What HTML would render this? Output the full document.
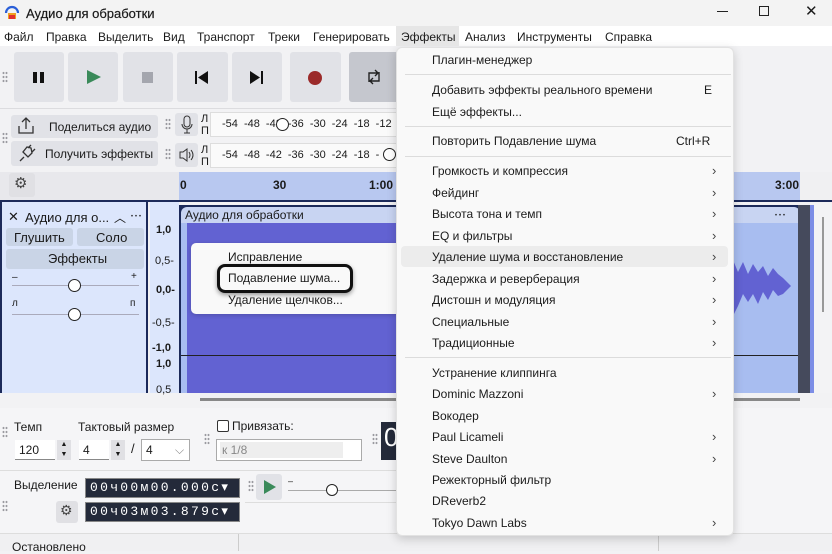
<!DOCTYPE html>
<html><head><meta charset="utf-8"><style>
*{box-sizing:border-box;margin:0;padding:0}
body{width:832px;height:551px;overflow:hidden;background:#f2f2f4;font-family:"Liberation Sans","Noto Sans CJK SC",sans-serif;font-size:12px;color:#1a1a1a;position:relative}
.a{position:absolute}
.btn{position:absolute;background:#e1e2e7;border-radius:3px}
.mi{position:absolute;left:432px;font-size:12px;color:#1b1b1b}
.ar{position:absolute;left:712px;font-size:13px;color:#444}
.sep{position:absolute;left:405px;width:326px;height:1px;background:#dcdcdc}
.grip{position:absolute;width:6px;height:12px;background-image:radial-gradient(#9a9aa0 0.8px,transparent 1px);background-size:3px 4px}
.dark{position:absolute;background:#242a3a;color:#fff;font-family:"Liberation Mono",monospace;font-size:13px;letter-spacing:2.3px;border:1px solid #888;padding:1px 0 0 4px}
</style></head><body>
<div class="a" style="left:0;top:0;width:832px;height:26px;background:#f3f3f3"></div>
<svg class="a" style="left:4px;top:4px" width="16" height="16"><path d="M2 9a6 6 0 0 1 12 0" stroke="#2a5fd8" stroke-width="2.2" fill="none"/><rect x="4" y="9" width="8" height="6" fill="#f0a020"/><rect x="5" y="11" width="6" height="4" fill="#e03030"/></svg>
<div class="a" style="left:26px;top:6px;font-size:13px;-webkit-text-stroke:0.2px #1a1a1a">Аудио для обработки</div>
<div class="a" style="left:717px;top:11px;width:11px;height:1px;background:#222"></div>
<div class="a" style="left:759px;top:6px;width:10px;height:10px;border:1px solid #222"></div>
<div class="a" style="left:805px;top:2px;font-size:15px">✕</div>
<div class="a" style="left:0;top:26px;width:832px;height:20px;background:#fff"></div>
<div class="a" style="left:4px;top:30px">Файл</div>
<div class="a" style="left:46px;top:30px">Правка</div>
<div class="a" style="left:98px;top:30px">Выделить</div>
<div class="a" style="left:163px;top:30px">Вид</div>
<div class="a" style="left:197px;top:30px">Транспорт</div>
<div class="a" style="left:268px;top:30px">Треки</div>
<div class="a" style="left:313px;top:30px">Генерировать</div>
<div class="a" style="left:465px;top:30px">Анализ</div>
<div class="a" style="left:517px;top:30px">Инструменты</div>
<div class="a" style="left:605px;top:30px">Справка</div>
<div class="grip" style="left:2px;top:71px"></div>
<div class="btn" style="left:14px;top:52px;width:50px;height:50px"></div>
<div class="a" style="left:33px;top:72px;width:4px;height:11px;background:#111"></div><div class="a" style="left:40px;top:72px;width:4px;height:11px;background:#111"></div>
<div class="btn" style="left:68px;top:52px;width:50px;height:50px"></div>
<svg class="a" style="left:86px;top:69px" width="16" height="16"><path d="M1 1L15 8L1 15Z" fill="#3a8a5a"/></svg>
<div class="btn" style="left:123px;top:52px;width:50px;height:50px"></div>
<div class="a" style="left:142px;top:72px;width:11px;height:11px;background:#a4a6ae"></div>
<div class="btn" style="left:177px;top:52px;width:51px;height:50px"></div>
<svg class="a" style="left:194px;top:70px" width="16" height="16"><rect x="1" y="1" width="2" height="13" fill="#111"/><path d="M14 1L4 7.5L14 14Z" fill="#111"/></svg>
<div class="btn" style="left:232px;top:52px;width:50px;height:50px"></div>
<svg class="a" style="left:249px;top:70px" width="16" height="16"><rect x="12" y="1" width="2" height="13" fill="#111"/><path d="M1 1L11 7.5L1 14Z" fill="#111"/></svg>
<div class="btn" style="left:290px;top:52px;width:51px;height:50px"></div>
<div class="a" style="left:308px;top:71px;width:14px;height:14px;border-radius:50%;background:#9b2a2a"></div>
<div class="btn" style="left:349px;top:52px;width:50px;height:50px;background:#c5c7ce"></div>
<svg class="a" style="left:365px;top:68px" width="18" height="18"><path d="M4 14V5h9M10 2l3 3-3 3M14 4v9H5M8 16l-3-3 3-3" stroke="#222" stroke-width="1.4" fill="none"/></svg>
<div class="a" style="left:0;top:108px;width:400px;height:1px;background:#dcdcdf"></div>
<div class="grip" style="left:2px;top:132px"></div>
<div class="btn" style="left:11px;top:115px;width:147px;height:23px"></div>
<svg class="a" style="left:16px;top:117px" width="20" height="18"><path d="M3 9v7h14V9M10 12V2M6 5l4-4 4 4" stroke="#333" stroke-width="1.3" fill="none"/></svg>
<div class="a" style="left:49px;top:120px">Поделиться аудио</div>
<div class="btn" style="left:11px;top:141px;width:147px;height:25px"></div>
<svg class="a" style="left:17px;top:143px" width="20" height="20"><path d="M3 18l4-4M6 9l5 5 4-4-1-5-4-1zM11 5l3-3M15 9l3-3" stroke="#333" stroke-width="1.3" fill="none"/></svg>
<div class="a" style="left:45px;top:147px">Получить эффекты</div>
<div class="grip" style="left:165px;top:118px"></div>
<div class="grip" style="left:165px;top:148px"></div>
<div class="btn" style="left:175px;top:113px;width:23px;height:23px"></div>
<svg class="a" style="left:180px;top:115px" width="14" height="19"><rect x="4" y="1" width="6" height="11" rx="3" stroke="#333" fill="none"/><path d="M2 9a5 5 0 0 0 10 0M7 14v4M4 18h6" stroke="#333" fill="none"/></svg>
<div class="btn" style="left:175px;top:143px;width:23px;height:24px"></div>
<svg class="a" style="left:178px;top:148px" width="18" height="14"><path d="M2 4h3l4-3v12l-4-3H2z M11 4q2 3 0 6 M13 2q4 5 0 10" stroke="#333" fill="none"/></svg>
<div class="a" style="left:201px;top:113px;font-size:11px;line-height:12px">Л<br>П</div>
<div class="a" style="left:201px;top:144px;font-size:11px;line-height:12px">Л<br>П</div>
<div class="a" style="left:210px;top:112px;width:190px;height:25px;background:#fafafa;border:1px solid #ddd"></div>
<div class="a" style="left:210px;top:143px;width:190px;height:25px;background:#fafafa;border:1px solid #ddd"></div>
<div class="a" style="left:222px;top:118px;font-size:11px;word-spacing:3px">-54 -48 -42 -36 -30 -24 -18 -12</div>
<div class="a" style="left:222px;top:149px;font-size:11px;word-spacing:3px">-54 -48 -42 -36 -30 -24 -18 -</div>
<div class="a" style="left:276px;top:118px;width:13px;height:13px;border-radius:50%;border:1.5px solid #222;background:#fff"></div>
<div class="a" style="left:383px;top:148px;width:13px;height:13px;border-radius:50%;border:1.5px solid #222;background:#fff"></div>
<div class="a" style="left:0;top:172px;width:179px;height:28px;background:#e8e8ec"></div>
<div class="btn" style="left:9px;top:173px;width:26px;height:24px;background:#e0e0e4"></div>
<div class="a" style="left:14px;top:174px;font-size:15px;color:#444">⚙</div>
<div class="a" style="left:179px;top:172px;width:621px;height:28px;background:#b8c8f0"></div>
<div class="a" style="left:800px;top:172px;width:32px;height:28px;background:#f0f0f2"></div>
<div class="a" style="left:180px;top:178px;font-weight:bold">0</div>
<div class="a" style="left:273px;top:178px;font-weight:bold">30</div>
<div class="a" style="left:369px;top:178px;font-weight:bold">1:00</div>
<div class="a" style="left:775px;top:178px;font-weight:bold">3:00</div>
<div class="a" style="left:0;top:200px;width:832px;height:2px;background:#1c2a5a"></div>
<div class="a" style="left:0;top:202px;width:148px;height:191px;background:#dce6fc;border-left:2px solid #1c2a5a;border-right:2px solid #1c2a5a"></div>
<div class="a" style="left:8px;top:209px;font-size:13px">✕</div>
<div class="a" style="left:25px;top:210px;font-size:13px">Аудио для о...</div>
<div class="a" style="left:114px;top:209px">︿</div>
<div class="a" style="left:130px;top:207px">⋯</div>
<div class="btn" style="left:6px;top:228px;width:67px;height:18px;background:#c9d4e6"></div>
<div class="a" style="left:14px;top:230px;font-size:13px">Глушить</div>
<div class="btn" style="left:77px;top:228px;width:67px;height:18px;background:#c9d4e6"></div>
<div class="a" style="left:96px;top:230px;font-size:13px">Соло</div>
<div class="btn" style="left:6px;top:249px;width:138px;height:20px;background:#c9d4e6"></div>
<div class="a" style="left:48px;top:251px;font-size:13px">Эффекты</div>
<div class="a" style="left:12px;top:272px;font-size:10px">–</div><div class="a" style="left:131px;top:271px;font-size:10px">+</div>
<div class="a" style="left:12px;top:285px;width:127px;height:1px;background:#aab"></div>
<div class="a" style="left:68px;top:279px;width:13px;height:13px;border-radius:50%;border:1.5px solid #222;background:#fff"></div>
<div class="a" style="left:12px;top:298px;font-size:10px">л</div><div class="a" style="left:130px;top:298px;font-size:10px">п</div>
<div class="a" style="left:12px;top:314px;width:127px;height:1px;background:#aab"></div>
<div class="a" style="left:68px;top:308px;width:13px;height:13px;border-radius:50%;border:1.5px solid #222;background:#fff"></div>
<div class="a" style="left:150px;top:202px;width:29px;height:191px;background:#dce6fc"></div>
<div class="a" style="left:156px;top:224px;font-weight:bold;font-size:11px">1,0</div>
<div class="a" style="left:155px;top:255px;font-size:11px">0,5-</div>
<div class="a" style="left:156px;top:284px;font-weight:bold;font-size:11px">0,0-</div>
<div class="a" style="left:152px;top:317px;font-size:11px">-0,5-</div>
<div class="a" style="left:152px;top:342px;font-size:11px;font-weight:bold">-1,0</div>
<div class="a" style="left:156px;top:358px;font-size:11px;font-weight:bold">1,0</div>
<div class="a" style="left:156px;top:384px;font-size:11px">0,5</div>
<div class="a" style="left:179px;top:205px;width:621px;height:188px;background:#1c2a5a"></div>
<div class="a" style="left:181px;top:207px;width:619px;height:16px;background:#c8d4f2;border-radius:6px 6px 0 0"></div>
<div class="a" style="left:185px;top:208px;font-size:12px">Аудио для обработки</div>
<div class="a" style="left:774px;top:206px">⋯</div>
<div class="a" style="left:181px;top:223px;width:619px;height:170px;background:#a8bdf0"></div>
<div class="a" style="left:187px;top:223px;width:546px;height:170px;background:#6262d2"></div>
<svg class="a" style="left:733px;top:250px" width="67" height="80"><path d="M0 10L5 22L10 12L15 24L20 14L25 22L30 16L35 26L40 18L45 24L50 28L58 36L50 44L45 46L40 40L35 50L30 42L25 54L20 44L15 52L10 44L5 56L0 66Z" fill="#6262d2"/></svg>
<div class="a" style="left:181px;top:355px;width:619px;height:1px;background:#222"></div>
<div class="a" style="left:798px;top:205px;width:12px;height:188px;background:#454a5c"></div>
<div class="a" style="left:810px;top:205px;width:4px;height:188px;background:#7c8de6"></div>
<div class="a" style="left:814px;top:202px;width:18px;height:191px;background:#f3f3f5"></div>
<div class="a" style="left:822px;top:217px;width:2px;height:95px;background:#999"></div>
<div class="a" style="left:200px;top:398px;width:600px;height:3px;background:#888"></div>
<div class="a" style="left:191px;top:243px;width:210px;height:71px;background:#f9f9f9;border-radius:5px;box-shadow:0 1px 5px rgba(0,0,0,.2)"></div>
<div class="a" style="left:228px;top:250px">Исправление</div>
<div class="a" style="left:217px;top:264px;width:136px;height:29px;border:3px solid #111;border-radius:8px;box-shadow:0 2px 5px rgba(0,0,0,.4)"></div>
<div class="a" style="left:228px;top:271px">Подавление шума...</div>
<div class="a" style="left:228px;top:293px">Удаление щелчков...</div>
<div class="a" style="left:0;top:408px;width:832px;height:125px;background:#f5f5f7"></div>
<div class="grip" style="left:2px;top:426px"></div>
<div class="a" style="left:14px;top:420px">Темп</div>
<div class="a" style="left:78px;top:420px">Тактовый размер</div>
<div class="a" style="left:15px;top:440px;width:40px;height:20px;background:#fff;border-bottom:1px solid #888;padding:3px 4px">120</div>
<div class="a" style="left:57px;top:440px;width:14px;height:20px;background:#e0e0e4;font-size:7px;text-align:center;line-height:10px">▲<br>▼</div>
<div class="a" style="left:79px;top:440px;width:30px;height:20px;background:#fff;border-bottom:1px solid #888;padding:3px 4px">4</div>
<div class="a" style="left:111px;top:440px;width:14px;height:20px;background:#e0e0e4;font-size:7px;text-align:center;line-height:10px">▲<br>▼</div>
<div class="a" style="left:131px;top:441px;font-size:13px">/</div>
<div class="a" style="left:141px;top:439px;width:49px;height:22px;background:#fff;border:1px solid #aaa;padding:3px 4px">4<span style="position:absolute;left:33px;color:#888">⌵</span></div>
<div class="grip" style="left:204px;top:433px"></div>
<div class="a" style="left:217px;top:420px;width:12px;height:12px;border:1px solid #333;border-radius:2px;background:#fff"></div>
<div class="a" style="left:232px;top:419px">Привязать:</div>
<div class="a" style="left:216px;top:439px;width:146px;height:22px;background:#fff;border:1px solid #aaa"></div>
<div class="a" style="left:220px;top:442px;width:123px;height:16px;background:#eee;color:#888;padding:1px 2px">к 1/8</div>
<div class="grip" style="left:372px;top:433px"></div>
<div class="a" style="left:381px;top:422px;width:19px;height:38px;background:#242a3a;color:#fff;font-size:26px;padding-left:3px">0</div>
<div class="a" style="left:0;top:470px;width:400px;height:1px;background:#ddd"></div>
<div class="grip" style="left:2px;top:500px"></div>
<div class="a" style="left:14px;top:478px">Выделение</div>
<div class="dark" style="left:85px;top:478px;width:155px;height:20px">00ч00м00.000с▾</div>
<div class="dark" style="left:85px;top:502px;width:155px;height:20px">00ч03м03.879с▾</div>
<div class="btn" style="left:56px;top:501px;width:22px;height:22px;background:#e0e0e4"></div>
<div class="a" style="left:60px;top:502px;font-size:14px;color:#444">⚙</div>
<div class="grip" style="left:248px;top:480px"></div>
<div class="btn" style="left:256px;top:474px;width:26px;height:26px"></div>
<svg class="a" style="left:263px;top:480px" width="14" height="14"><path d="M1 0L13 7L1 14Z" fill="#3a8a5a"/></svg>
<div class="a" style="left:288px;top:476px;font-size:9px">–</div>
<div class="a" style="left:288px;top:490px;width:110px;height:1px;background:#aaa"></div>
<div class="a" style="left:326px;top:484px;width:12px;height:12px;border-radius:50%;border:1.5px solid #222;background:#fff"></div>
<div class="a" style="left:245px;top:502px;width:155px;height:1px;background:#ddd"></div>
<div class="a" style="left:0;top:533px;width:832px;height:1px;background:#ddd"></div>
<div class="a" style="left:0;top:534px;width:832px;height:17px;background:#f0f0f2"></div>
<div class="a" style="left:12px;top:540px">Остановлено</div>
<div class="a" style="left:238px;top:534px;width:1px;height:17px;background:#ccc"></div>
<div class="a" style="left:658px;top:534px;width:1px;height:17px;background:#ccc"></div>
<div class="a" style="left:396px;top:47px;width:338px;height:489px;background:#f9f9f9;border:1px solid #e2e2e2;border-radius:6px;box-shadow:0 3px 10px rgba(0,0,0,.18)"></div>
<div class="a" style="left:396px;top:26px;width:63px;height:20px;background:#e6e6e6"></div>
<div class="a" style="left:401px;top:30px">Эффекты</div>
<div class="mi" style="top:53px">Плагин-менеджер</div>
<div class="sep" style="top:74px"></div>
<div class="mi" style="top:83px">Добавить эффекты реального времени</div><div class="a" style="left:704px;top:83px">E</div>
<div class="mi" style="top:105px">Ещё эффекты...</div>
<div class="sep" style="top:126px"></div>
<div class="mi" style="top:134px">Повторить Подавление шума</div><div class="a" style="left:676px;top:134px">Ctrl+R</div>
<div class="sep" style="top:156px"></div>
<div class="a" style="left:401px;top:246px;width:327px;height:21px;background:#ececec;border-radius:4px"></div>
<div class="mi" style="top:164px">Громкость и компрессия</div><div class="ar" style="top:163px">›</div>
<div class="mi" style="top:186px">Фейдинг</div><div class="ar" style="top:185px">›</div>
<div class="mi" style="top:207px">Высота тона и темп</div><div class="ar" style="top:206px">›</div>
<div class="mi" style="top:229px">EQ и фильтры</div><div class="ar" style="top:228px">›</div>
<div class="mi" style="top:250px">Удаление шума и восстановление</div><div class="ar" style="top:249px">›</div>
<div class="mi" style="top:272px">Задержка и реверберация</div><div class="ar" style="top:271px">›</div>
<div class="mi" style="top:293px">Дистошн и модуляция</div><div class="ar" style="top:292px">›</div>
<div class="mi" style="top:315px">Специальные</div><div class="ar" style="top:314px">›</div>
<div class="mi" style="top:336px">Традиционные</div><div class="ar" style="top:335px">›</div>
<div class="sep" style="top:357px"></div>
<div class="mi" style="top:366px">Устранение клиппинга</div>
<div class="mi" style="top:387px">Dominic Mazzoni</div><div class="ar" style="top:386px">›</div>
<div class="mi" style="top:409px">Вокодер</div>
<div class="mi" style="top:430px">Paul Licameli</div><div class="ar" style="top:429px">›</div>
<div class="mi" style="top:452px">Steve Daulton</div><div class="ar" style="top:451px">›</div>
<div class="mi" style="top:473px">Режекторный фильтр</div>
<div class="mi" style="top:494px">DReverb2</div>
<div class="mi" style="top:516px">Tokyo Dawn Labs</div><div class="ar" style="top:515px">›</div>
</body></html>
